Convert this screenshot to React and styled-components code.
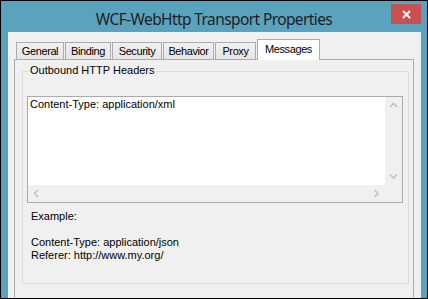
import React from 'react'
import styled, { createGlobalStyle } from 'styled-components'

const GlobalStyle = createGlobalStyle`
  html, body {
    margin: 0;
    padding: 0;
    background: #000;
  }
  body {
    font-family: "Liberation Sans", Arial, sans-serif;
  }
`

const tabs = [
  { label: 'General', width: 48 },
  { label: 'Binding', width: 46 },
  { label: 'Security', width: 50 },
  { label: 'Behavior', width: 51 },
  { label: 'Proxy', width: 41 },
  { label: 'Messages', width: 63, active: true },
]

function Chevron({ dir }) {
  const pts = {
    up: '1,5 4.5,1.5 8,5',
    down: '1,1.5 4.5,5 8,1.5',
    left: '5,1 1.5,4.5 5,8',
    right: '1.5,1 5,4.5 1.5,8',
  }[dir]
  const vertical = dir === 'up' || dir === 'down'
  return (
    <svg width={vertical ? 9 : 7} height={vertical ? 7 : 9} viewBox={vertical ? '0 0 9 7' : '0 0 7 9'}>
      <polyline points={pts} fill="none" stroke="#c2c2c2" strokeWidth="1.6" />
    </svg>
  )
}

export default function App() {
  return (
    <>
      <GlobalStyle />
      <Window>
        <TitleBar>
          <span />
          <Title>WCF-WebHttp Transport Properties</Title>
          <CloseButton>
            <svg width="9" height="9" viewBox="0 0 9 9">
              <path d="M1 1 L8 8 M8 1 L1 8" stroke="#fff" strokeWidth="1.8" />
            </svg>
          </CloseButton>
        </TitleBar>
        <Client>
          <TabStrip>
            {tabs.map((t) => (
              <Tab key={t.label} $w={t.width} $active={t.active}>
                {t.label}
              </Tab>
            ))}
          </TabStrip>
          <TabPanel>
            <GroupBox>
              <GroupLabel>Outbound HTTP Headers</GroupLabel>
              <TextBox>
                <TextContent>Content-Type: application/xml</TextContent>
                <VScroll>
                  <ArrowButton><Chevron dir="up" /></ArrowButton>
                  <ArrowButton><Chevron dir="down" /></ArrowButton>
                </VScroll>
                <HScroll>
                  <ArrowButton><Chevron dir="left" /></ArrowButton>
                  <ArrowButton><Chevron dir="right" /></ArrowButton>
                </HScroll>
                <Corner />
              </TextBox>
              <Hint>
                <div>Example:</div>
                <div>&nbsp;</div>
                <div>Content-Type: application/json</div>
                <div>Referer: http://www.my.org/</div>
              </Hint>
            </GroupBox>
          </TabPanel>
        </Client>
      </Window>
    </>
  )
}

const Window = styled.div`
  margin: 1px;
  width: 426px;
  height: 297px;
  background: #5ba2be;
  display: flex;
  flex-direction: column;
  overflow: hidden;
`

const TitleBar = styled.div`
  height: 31px;
  flex: none;
  display: grid;
  grid-template-columns: 1fr auto 1fr;
`

const Title = styled.div`
  font-family: "Noto Sans", "Open Sans", sans-serif;
  font-size: 15.5px;
  letter-spacing: -0.6px;
  color: #1f1f1f;
  line-height: 20px;
  padding-top: 8px;
  white-space: nowrap;
`

const CloseButton = styled.div`
  justify-self: end;
  align-self: start;
  margin-top: 3px;
  margin-right: 6px;
  width: 30px;
  height: 20px;
  background: #c75050;
  display: flex;
  align-items: center;
  justify-content: center;
`

const Client = styled.div`
  flex: 1;
  margin: 0 6px 0 7px;
  background: #f0f0f0;
  padding: 7px 7px 0 6px;
  display: flex;
  flex-direction: column;
`

const TabStrip = styled.div`
  display: flex;
  align-items: flex-end;
  gap: 1px;
  height: 20px;
  padding-left: 2px;
  position: relative;
  z-index: 1;
`

const Tab = styled.div`
  box-sizing: border-box;
  width: ${(p) => p.$w}px;
  height: ${(p) => (p.$active ? 21 : 17)}px;
  margin-bottom: ${(p) => (p.$active ? -1 : 0)}px;
  border: 1px solid #acacac;
  border-bottom: none;
  background: ${(p) => (p.$active ? '#fff' : 'linear-gradient(#f0f0f0, #e5e5e5)')};
  font-size: 11px;
  letter-spacing: -0.4px;
  line-height: ${(p) => (p.$active ? 16 : 15)}px;
  color: #000;
  text-align: center;
  padding-top: 1px;
`

const TabPanel = styled.div`
  flex: 1;
  border: 1px solid #acacac;
  border-bottom: none;
  padding: 11px 4px 0 7px;
`

const GroupBox = styled.div`
  box-sizing: border-box;
  height: 213px;
  border: 1px solid #dcdcdc;
  padding: 0 5px 0 4px;
`

const GroupLabel = styled.div`
  width: fit-content;
  margin: -8px 0 0 2px;
  padding: 0 1px;
  background: #f0f0f0;
  font-size: 11px;
  line-height: 13px;
  color: #000;
`

const TextBox = styled.div`
  margin-top: 19px;
  height: 107px;
  box-sizing: border-box;
  border: 1px solid #ababab;
  background: #fff;
  display: grid;
  grid-template-columns: 1fr 17px;
  grid-template-rows: 1fr 17px;
`

const TextContent = styled.div`
  padding: 1px 2px 0;
  font-size: 11px;
  line-height: 13px;
  color: #000;
`

const VScroll = styled.div`
  background: #f0f0f0;
  display: flex;
  flex-direction: column;
  justify-content: space-between;
`

const HScroll = styled.div`
  background: #f0f0f0;
  display: flex;
  justify-content: space-between;
`

const Corner = styled.div`
  background: #f0f0f0;
`

const ArrowButton = styled.div`
  width: 17px;
  height: 17px;
  display: flex;
  align-items: center;
  justify-content: center;
`

const Hint = styled.div`
  margin-top: 7px;
  padding-left: 4px;
  font-size: 11px;
  line-height: 13px;
  color: #000;
`
